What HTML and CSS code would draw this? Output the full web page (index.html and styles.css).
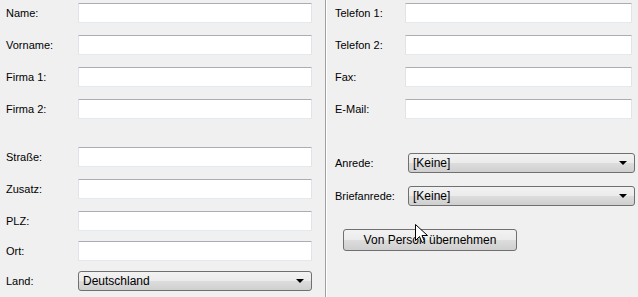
FILE: index.html
```html
<!DOCTYPE html>
<html lang="de">
<head>
    <meta charset="UTF-8">
    <title>Adresse</title>
    <link rel="stylesheet" href="styles.css">
</head>
<body>
    <div class="form">
        <div class="spalte links">
            <div class="zeile z-erste"><span class="label">Name:</span><input class="feld"></div>
            <div class="zeile"><span class="label">Vorname:</span><input class="feld"></div>
            <div class="zeile"><span class="label">Firma 1:</span><input class="feld"></div>
            <div class="zeile"><span class="label">Firma 2:</span><input class="feld"></div>

            <div class="zeile z-block"><span class="label">Straße:</span><input class="feld"></div>
            <div class="zeile"><span class="label">Zusatz:</span><input class="feld"></div>
            <div class="zeile"><span class="label">PLZ:</span><input class="feld"></div>
            <div class="zeile z-eng"><span class="label">Ort:</span><input class="feld"></div>
            <div class="zeile z-eng"><span class="label">Land:</span>
                <div class="combo"><span>Deutschland</span><span class="pfeil"></span></div>
            </div>
        </div>

        <div class="trenner"></div>

        <div class="spalte rechts">
            <div class="zeile z-erste"><span class="label">Telefon 1:</span><input class="feld"></div>
            <div class="zeile"><span class="label">Telefon 2:</span><input class="feld"></div>
            <div class="zeile"><span class="label">Fax:</span><input class="feld"></div>
            <div class="zeile"><span class="label">E-Mail:</span><input class="feld"></div>

            <div class="zeile z-anrede"><span class="label">Anrede:</span>
                <div class="combo"><span>[Keine]</span><span class="pfeil"></span></div>
            </div>
            <div class="zeile z-brief"><span class="label">Briefanrede:</span>
                <div class="combo"><span>[Keine]</span><span class="pfeil"></span></div>
            </div>

            <button class="knopf">Von Person übernehmen</button>
        </div>
    </div>

    <svg class="cursor" width="13" height="20" viewBox="0 0 13 20">
        <path d="M0.5 0.5 L0.5 16.5 L4.5 12.5 L7 18.5 L9.5 17.5 L7 11.5 L12.5 11.5 Z" fill="#fff" stroke="#000" stroke-width="1"/>
    </svg>
</body>
</html>
```

FILE: styles.css
```css
body {
    margin: 0;
    background-color: #f0f0f0;
    font-family: "Liberation Sans", Arial, sans-serif;
    font-size: 11px;
    color: #000;
    width: 638px;
    height: 297px;
    overflow: hidden;
}

.form {
    display: flex;
    height: 297px;
}

.spalte {
    display: flex;
    flex-direction: column;
}
.links {
    width: 325px;
}
.rechts {
    flex: 1;
}

.trenner {
    width: 1px;
    background-color: #a0a0a0;
    border-right: 1px solid #ffffff;
}

.zeile {
    display: flex;
    align-items: center;
    height: 20px;
    margin-top: 12px;
}
.zeile.z-erste {
    margin-top: 3px;
}
.zeile.z-block {
    margin-top: 28px;
}
.zeile.z-eng {
    margin-top: 10px;
}
.zeile.z-anrede {
    margin-top: 34px;
}
.zeile.z-brief {
    margin-top: 13px;
}

.links .label {
    width: 72px;
    padding-left: 6px;
}
.rechts .label {
    width: 70px;
    padding-left: 8px;
}

.feld {
    box-sizing: border-box;
    width: 234px;
    height: 20px;
    margin: 0;
    padding: 0 3px;
    background: #ffffff;
    border: 1px solid #e2e3ea;
    border-top-color: #abadb3;
    border-bottom-color: #e3e9ef;
    border-radius: 1px;
    outline: none;
    font: inherit;
}
.rechts .feld {
    width: 227px;
}

.combo {
    box-sizing: border-box;
    display: flex;
    align-items: center;
    justify-content: space-between;
    width: 234px;
    height: 20px;
    padding: 0 7px 0 4px;
    border: 1px solid #707070;
    border-radius: 3px;
    background: linear-gradient(#f2f2f2 0%, #ebebeb 50%, #dddddd 50%, #cfcfcf 100%);
    font-size: 12px;
}
.rechts .combo {
    width: 227px;
    margin-left: 3px;
}

.pfeil {
    width: 0;
    height: 0;
    border-left: 4px solid transparent;
    border-right: 4px solid transparent;
    border-top: 4px solid #000;
}

.knopf {
    box-sizing: border-box;
    width: 174px;
    height: 22px;
    margin-top: 23px;
    margin-left: 16px;
    padding: 0;
    border: 1px solid #707070;
    border-radius: 3px;
    background: linear-gradient(#f2f2f2 0%, #ebebeb 50%, #dddddd 50%, #cfcfcf 100%);
    font-family: inherit;
    font-size: 12px;
    color: #000;
}

.cursor {
    position: absolute;
    left: 415px;
    top: 224px;
}
```
